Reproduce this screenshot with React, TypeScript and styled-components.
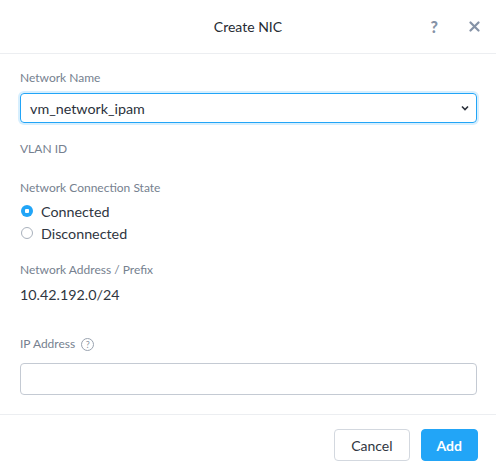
import styled, { createGlobalStyle } from 'styled-components';

const GlobalStyle = createGlobalStyle`
  html, body {
    margin: 0;
    padding: 0;
    background: #fff;
  }
  body {
    font-family: Lato, "Open Sans", "Liberation Sans", sans-serif;
    color: #2f3641;
  }
  * { box-sizing: border-box; }
`;

const Modal = styled.div`
  width: 496px;
  height: 476px;
  display: flex;
  flex-direction: column;
  background: #fff;
`;

const Header = styled.div`
  height: 54px;
  flex-shrink: 0;
  display: flex;
  align-items: center;
  justify-content: center;
  position: relative;
  border-bottom: 1px solid #eceef1;
`;

const Title = styled.div`
  font-size: 14px;
  color: #262b33;
`;

const HeaderActions = styled.div`
  position: absolute;
  right: 16px;
  top: 0;
  height: 100%;
  display: flex;
  align-items: center;
  gap: 31px;
`;

const HeaderIcon = styled.span`
  color: #8592a6;
  font-size: 16px;
  font-weight: 900;
  line-height: 1;
  display: flex;
  align-items: center;
`;

const Body = styled.div`
  flex: 1;
  padding: 16px 19px 0 20px;
`;

const Field = styled.div<{ $gap?: number }>`
  margin-bottom: ${(p) => p.$gap ?? 17}px;
`;

const Label = styled.div<{ $space?: number }>`
  font-size: 12px;
  line-height: 16px;
  color: #76818f;
  display: flex;
  align-items: center;
  gap: 6px;
  margin-bottom: ${(p) => p.$space ?? 7}px;
`;

const HelpCircle = styled.span`
  width: 13px;
  height: 13px;
  border: 1px solid #9aa3b0;
  border-radius: 50%;
  font-size: 9px;
  line-height: 11px;
  text-align: center;
  color: #8d96a3;
`;

const SelectBox = styled.div`
  height: 30px;
  border: 1px solid #22a5f7;
  border-radius: 4px;
  box-shadow: 0 0 0 2px rgba(34, 165, 247, 0.18);
  display: flex;
  align-items: center;
  justify-content: space-between;
  padding: 0 7px 0 9px;
  font-size: 14.3px;
  color: #2b313b;
`;

const TextBox = styled.div`
  height: 32px;
  border: 1px solid #c4cad3;
  border-radius: 4px;
`;

const Value = styled.div`
  font-size: 14.3px;
  line-height: 20px;
  color: #2f3641;
`;

const RadioRow = styled.label`
  display: flex;
  align-items: center;
  height: 22px;
  gap: 8px;
  font-size: 14.3px;
  color: #2f3641;
  padding-left: 1px;
`;

const RadioDot = styled.span<{ $checked?: boolean }>`
  width: 12px;
  height: 12px;
  border-radius: 50%;
  flex-shrink: 0;
  ${(p) =>
    p.$checked
      ? 'background: radial-gradient(circle, #fff 0 2px, #22a5f7 2.5px);'
      : 'border: 1px solid #a9b1bc; background: #fff;'}
`;

const Footer = styled.div`
  height: 62px;
  flex-shrink: 0;
  border-top: 1px solid #eceef1;
  display: flex;
  align-items: center;
  justify-content: flex-end;
  gap: 11px;
  padding-right: 18px;
  padding-bottom: 1px;
`;

const Button = styled.button<{ $primary?: boolean }>`
  height: 32px;
  padding: 0 ${(p) => (p.$primary ? 15 : 16)}px;
  border-radius: 4px;
  font-family: inherit;
  font-size: 14px;
  cursor: pointer;
  border: 1px solid ${(p) => (p.$primary ? '#22a5f7' : '#d3d8df')};
  background: ${(p) => (p.$primary ? '#22a5f7' : '#fff')};
  color: ${(p) => (p.$primary ? '#fff' : '#2f3641')};
  font-weight: ${(p) => (p.$primary ? 700 : 400)};
`;

const Chevron = () => (
  <svg width="8" height="6" viewBox="0 0 8 6">
    <path d="M1 1.5 L4 4.5 L7 1.5" fill="none" stroke="#2b313b" strokeWidth="1.6" />
  </svg>
);

const CloseIcon = () => (
  <svg width="11" height="11" viewBox="0 0 11 11">
    <path d="M1.5 1.5 L9.5 9.5 M9.5 1.5 L1.5 9.5" stroke="#8592a6" strokeWidth="2.2" strokeLinecap="round" />
  </svg>
);

export default function App() {
  return (
    <>
      <GlobalStyle />
      <Modal>
        <Header>
          <Title>Create NIC</Title>
          <HeaderActions>
            <HeaderIcon>?</HeaderIcon>
            <HeaderIcon>
              <CloseIcon />
            </HeaderIcon>
          </HeaderActions>
        </Header>
        <Body>
          <Field $gap={18}>
            <Label>Network Name</Label>
            <SelectBox>
              <span>vm_network_ipam</span>
              <Chevron />
            </SelectBox>
          </Field>
          <Field $gap={23}>
            <Label $space={0}>VLAN ID</Label>
          </Field>
          <Field $gap={18}>
            <Label $space={4}>Network Connection State</Label>
            <RadioRow>
              <RadioDot $checked />
              Connected
            </RadioRow>
            <RadioRow>
              <RadioDot />
              Disconnected
            </RadioRow>
          </Field>
          <Field $gap={31}>
            <Label>Network Address / Prefix</Label>
            <Value>10.42.192.0/24</Value>
          </Field>
          <Field $gap={0}>
            <Label $space={11}>
              IP Address
              <HelpCircle>?</HelpCircle>
            </Label>
            <TextBox />
          </Field>
        </Body>
        <Footer>
          <Button>Cancel</Button>
          <Button $primary>Add</Button>
        </Footer>
      </Modal>
    </>
  );
}
